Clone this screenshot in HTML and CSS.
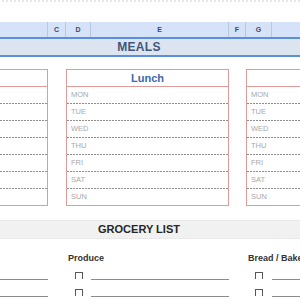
FILE: index.html
```html
<!DOCTYPE html>
<html lang="en">
<head>
    <meta charset="UTF-8">
    <meta name="viewport" content="width=device-width, initial-scale=1.0">
    <title>Weekly Meal Planner</title>
    <link rel="stylesheet" href="styles.css">
</head>
<body>
    <div class="sheet">
        <div class="top-rule"></div>

        <!-- Column letters (A, B, H, I sit outside the view) -->
        <div class="col-heads">
            <div class="col-head"></div>
            <div class="col-head"></div>
            <div class="col-head">C</div>
            <div class="col-head">D</div>
            <div class="col-head">E</div>
            <div class="col-head">F</div>
            <div class="col-head">G</div>
            <div class="col-head"></div>
            <div class="col-head"></div>
        </div>

        <div class="band meals">
            <div class="band-title">MEALS</div>
        </div>

        <!-- Meal boxes -->
        <div class="meal-row">
            <div class="meal-box first">
                <div class="meal-title"></div>
                <div class="day"></div>
                <div class="day"></div>
                <div class="day"></div>
                <div class="day"></div>
                <div class="day"></div>
                <div class="day"></div>
                <div class="day"></div>
            </div>
            <div class="meal-box second">
                <div class="meal-title">Lunch</div>
                <div class="day">MON</div>
                <div class="day">TUE</div>
                <div class="day">WED</div>
                <div class="day">THU</div>
                <div class="day">FRI</div>
                <div class="day">SAT</div>
                <div class="day">SUN</div>
            </div>
            <div class="meal-box third">
                <div class="meal-title"></div>
                <div class="day">MON</div>
                <div class="day">TUE</div>
                <div class="day">WED</div>
                <div class="day">THU</div>
                <div class="day">FRI</div>
                <div class="day">SAT</div>
                <div class="day">SUN</div>
            </div>
        </div>

        <div class="band grocery">
            <div class="band-title">GROCERY LIST</div>
        </div>

        <!-- Grocery list -->
        <div class="grocery-grid">
            <div class="cat first"></div>
            <div class="cat second">Produce</div>
            <div class="cat third">Bread / Bakery</div>

            <div class="check first"><span class="box"></span></div>
            <div class="item first"></div>
            <div class="check second"><span class="box"></span></div>
            <div class="item second"></div>
            <div class="check third"><span class="box"></span></div>
            <div class="item third"></div>

            <div class="check first"><span class="box"></span></div>
            <div class="item first"></div>
            <div class="check second"><span class="box"></span></div>
            <div class="item second"></div>
            <div class="check third"><span class="box"></span></div>
            <div class="item third"></div>
        </div>
    </div>
</body>
</html>
```

FILE: styles.css
```css
body {
    margin: 0;
    font-family: "Liberation Sans", Arial, sans-serif;
    background-color: #fff;
    overflow: hidden;
}
.sheet {
    margin-left: -115px;
    width: 543px;
}
.top-rule {
    height: 0;
    border-top: 2px dotted #e6e6e6;
}

/* Column letters */
.col-heads {
    display: grid;
    grid-template-columns: 25px 138px 18px 25px 138px 17px 26px 138px 18px;
    margin-top: 20px;
    height: 15px;
    background-color: #d5e2f7;
    border-bottom: 2px solid #5a8fdc;
}
.col-head {
    border-right: 1px solid #b7c7df;
    font-size: 7px;
    font-weight: bold;
    color: #3b4a69;
    text-align: center;
    line-height: 15px;
}

/* Section bands */
.band {
    display: grid;
    grid-template-columns: 508px 35px;
}
.meals {
    height: 16px;
    background-color: #dce4ef;
    border-bottom: 2px solid #5a8fdc;
}
.meals .band-title {
    font-size: 12px;
    font-weight: bold;
    letter-spacing: 0.3px;
    color: #3f577c;
    line-height: 16px;
    text-align: center;
}
.grocery {
    margin-top: 14px;
    height: 17px;
    background-color: #f1f1f1;
    border-top: 1px dotted #e2e2e2;
    border-bottom: 1px dotted #e2e2e2;
}
.grocery .band-title {
    font-size: 11px;
    font-weight: bold;
    color: #262626;
    line-height: 17px;
    text-align: center;
}

/* Meal boxes */
.meal-row {
    display: grid;
    grid-template-columns: 25px 138px 18px 25px 138px 17px 26px 138px 18px;
    margin-top: 12px;
}
.first {
    grid-column: 1 / 3;
}
.second {
    grid-column: 4 / 6;
}
.third {
    grid-column: 7 / 9;
}
.meal-box {
    border: 1px solid #e19a9a;
}
.meal-title {
    height: 16px;
    border-bottom: 1px solid #e19a9a;
    font-size: 11px;
    font-weight: bold;
    color: #3b69b0;
    text-align: center;
    line-height: 16px;
}
.day {
    height: 17px;
    padding-left: 4px;
    font-size: 7.5px;
    color: #a8a8a8;
    line-height: 16px;
    background-image: repeating-linear-gradient(to right, #8e8e8e 0 2px, transparent 2px 3px);
    background-size: 100% 1px;
    background-position: left bottom;
    background-repeat: no-repeat;
}
.day:last-child {
    height: 16px;
    background-image: none;
}

/* Grocery list */
.grocery-grid {
    display: grid;
    grid-template-columns: 25px 138px 18px 25px 138px 17px 26px 138px 18px;
    grid-template-rows: 25px;
    grid-auto-rows: 17px;
}
.cat {
    grid-row: 1;
    padding: 14px 0 0 2px;
    font-size: 9px;
    font-weight: bold;
    color: #333;
    line-height: 10px;
    white-space: nowrap;
}
.grocery-grid .check.first {
    grid-column: 1;
}
.grocery-grid .item.first {
    grid-column: 2;
}
.grocery-grid .check.second {
    grid-column: 4;
}
.grocery-grid .item.second {
    grid-column: 5;
}
.grocery-grid .check.third {
    grid-column: 7;
}
.grocery-grid .item.third {
    grid-column: 8;
}
.check {
    display: flex;
    justify-content: center;
    align-items: flex-end;
    padding-bottom: 2px;
}
.box {
    width: 6px;
    height: 6px;
    border: 1px solid #555;
    border-bottom: none;
}
.item {
    border-bottom: 1px solid #8c8c8c;
    margin-bottom: 1px;
}
```
